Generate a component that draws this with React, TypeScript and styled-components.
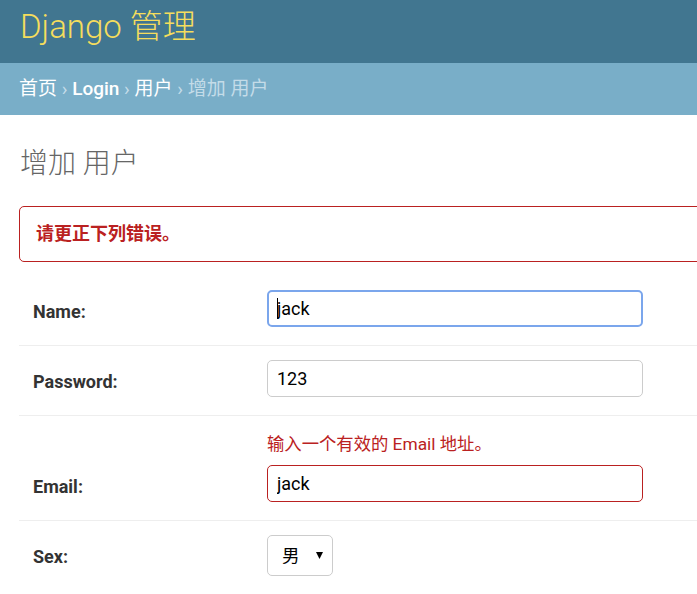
import React from "react";
import styled, { createGlobalStyle } from "styled-components";

const Global = createGlobalStyle`
  html, body {
    margin: 0;
    padding: 0;
    background: #fff;
    overflow: hidden;
  }
  body {
    font-family: Roboto, "Noto Sans CJK SC", sans-serif;
    color: #333;
  }
  * { box-sizing: border-box; }
`;

const Page = styled.div`
  width: 100%;
  overflow: hidden;
`;

const Header = styled.header`
  background: #417690;
  height: 63px;
  padding: 7px 20px 0;
`;

const Branding = styled.h1`
  margin: 0;
  font-size: 33px;
  line-height: 40px;
  font-weight: 300;
  color: #f5dd5d;
`;

const Breadcrumbs = styled.nav`
  background: #79aec8;
  padding: 14px 19px;
  font-size: 19px;
  line-height: 24px;
  color: #c4dce8;
`;

const Crumb = styled.a<{ $strong?: boolean }>`
  color: #fff;
  text-decoration: none;
  font-weight: ${(p) => (p.$strong ? 500 : 400)};
`;

const Content = styled.main`
  padding: 0 0 0 19px;
`;

const Title = styled.h1`
  margin: 33px 0 26px 1px;
  font-size: 28px;
  line-height: 32px;
  font-weight: 300;
  color: #666;
`;

const ErrorNote = styled.p`
  margin: 0 -8px 14px 0;
  padding: 15px 16px;
  border: 1px solid #ba2121;
  border-radius: 5px;
  color: #ba2121;
  font-weight: 700;
  font-size: 18px;
  line-height: 24px;
`;

const Row = styled.div`
  padding: 14px 14px;
  border-bottom: 1px solid #eee;

  &:last-child {
    border-bottom: none;
  }
`;

const ErrorList = styled.ul`
  list-style: none;
  margin: 0 0 9px 234px;
  padding: 2px 0 0;
  font-size: 17.33px;
  line-height: 24px;
  color: #ba2121;
`;

const FieldLine = styled.div`
  display: flex;
  align-items: flex-start;
  min-height: 41px;
`;

const Label = styled.label`
  width: 234px;
  flex-shrink: 0;
  padding-top: 11px;
  font-weight: 700;
  font-size: 18px;
  line-height: 22px;
  color: #333;
`;

const FieldWrap = styled.div`
  position: relative;
`;

type InputState = "focus" | "error" | "normal";

const TextInput = styled.input<{ $state: InputState }>`
  display: block;
  width: 376px;
  height: 37px;
  margin: 0;
  border: ${(p) => (p.$state === "focus" ? "2px" : "1px")} solid
    ${(p) =>
      p.$state === "focus" ? "#7ba6ec" : p.$state === "error" ? "#ba2121" : "#ccc"};
  border-radius: 5px;
  padding: 0 ${(p) => (p.$state === "focus" ? "8px" : "9px")};
  font-family: Roboto, "Noto Sans CJK SC", sans-serif;
  font-size: 18px;
  color: #000;
  background: #fff;
  outline: none;
`;

const Caret = styled.span`
  position: absolute;
  left: 10px;
  top: 8px;
  width: 1px;
  height: 21px;
  background: #000;
`;

const SelectWrap = styled.div`
  position: relative;
  width: 66px;
  height: 41px;
`;

const Select = styled.select`
  appearance: none;
  -webkit-appearance: none;
  width: 66px;
  height: 41px;
  margin: 0;
  border: 1px solid #ccc;
  border-radius: 5px;
  padding: 0 0 0 14px;
  font-family: Roboto, "Noto Sans CJK SC", sans-serif;
  font-size: 17.5px;
  color: #000;
  background: #fff;
  outline: none;
`;

const Arrow = styled.svg`
  position: absolute;
  right: 10px;
  top: 17px;
  width: 7px;
  height: 7px;
  pointer-events: none;
`;

export default function App() {
  return (
    <Page>
      <Global />
      <Header>
        <Branding>Django 管理</Branding>
      </Header>
      <Breadcrumbs>
        <Crumb href="#">首页</Crumb> ›{" "}
        <Crumb href="#" $strong>
          Login
        </Crumb>{" "}
        › <Crumb href="#">用户</Crumb> › 增加 用户
      </Breadcrumbs>
      <Content>
        <Title>增加 用户</Title>
        <ErrorNote>请更正下列错误。</ErrorNote>
        <form>
          <Row>
            <FieldLine>
              <Label htmlFor="id_name">Name:</Label>
              <FieldWrap>
                <TextInput id="id_name" $state="focus" defaultValue="jack" readOnly />
                <Caret />
              </FieldWrap>
            </FieldLine>
          </Row>
          <Row>
            <FieldLine>
              <Label htmlFor="id_password">Password:</Label>
              <TextInput id="id_password" $state="normal" defaultValue="123" readOnly />
            </FieldLine>
          </Row>
          <Row>
            <ErrorList>
              <li>输入一个有效的 Email 地址。</li>
            </ErrorList>
            <FieldLine>
              <Label htmlFor="id_email">Email:</Label>
              <TextInput id="id_email" $state="error" defaultValue="jack" readOnly />
            </FieldLine>
          </Row>
          <Row>
            <FieldLine>
              <Label htmlFor="id_sex">Sex:</Label>
              <SelectWrap>
                <Select id="id_sex" defaultValue="m">
                  <option value="m">男</option>
                  <option value="f">女</option>
                </Select>
                <Arrow viewBox="0 0 7 7">
                  <path d="M0 0 H7 L3.5 7 Z" fill="#000" />
                </Arrow>
              </SelectWrap>
            </FieldLine>
          </Row>
        </form>
      </Content>
    </Page>
  );
}
